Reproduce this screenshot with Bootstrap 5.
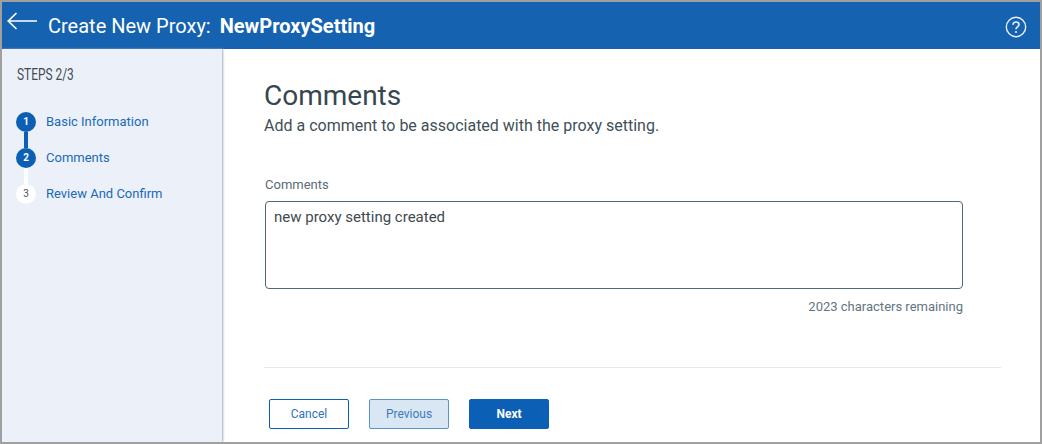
<!DOCTYPE html>
<html lang="en">
<head>
<meta charset="utf-8">
<title>Create New Proxy</title>
<link href="https://cdn.jsdelivr.net/npm/bootstrap@5.3.0/dist/css/bootstrap.min.css" rel="stylesheet">
<style>
html,body{height:100%;margin:0;overflow:hidden}
body{font-family:Roboto,"Liberation Sans",sans-serif;background:#fff}
.frame{width:1042px;height:444px;border:2px solid #a0a0a0;display:flex;flex-direction:column;overflow:hidden}
.topbar{height:47px;flex:none;background:#1462b0;color:#fff;padding:0 13px 0 5px}
.back-ico{width:31px;height:20px;margin-top:-9px;flex:none}
.head-title{font-size:20px;margin-left:10px;line-height:24px}
.head-name{font-size:20px;font-weight:700;margin-left:9px;line-height:24px}
.help-ico{width:22px;height:22px;flex:none;margin-top:2px}
.side{width:220px;flex:none;background:#ecf1f9;box-shadow:1px 0 2px 0 #a9acb0;padding:15px 14px 0}
.steps-ttl{font-size:17px;line-height:20px;color:#3f4a55;margin:0 0 28px 1px;transform:scaleX(.7);transform-origin:left center;white-space:nowrap}
.step-col{width:20px;flex:none}
.dot{width:20px;height:20px;border-radius:50%;font-size:10px;font-weight:700;line-height:20px;text-align:center;background:#0b5fb4;color:#fff}
.dot-off{background:#fff;color:#4a5560;font-weight:400}
.link-line{width:4px;height:16px;margin:0 auto;background:#0b5fb4}
.link-off{background:#fff}
.step-lbl{font-size:13px;line-height:20px;color:#1a69b8;margin-left:10px}
.pane{padding:0 39px 0 42px;min-width:0}
.pg-title{font-size:28px;font-weight:400;line-height:34px;color:#36474f;margin:30px 0 0}
.pg-sub{font-size:16px;line-height:20px;color:#3f4f58;margin:3px 0 0}
.fld-lbl{font-size:13px;line-height:16px;color:#5a6b76;margin:41px 0 8px 1px}
.txt-box{width:698px;height:88px;margin-left:1px;border:1px solid #4f6a77;border-radius:4px;padding:6px 8px;font-size:15px;line-height:18px;color:#3f4a50;resize:none;box-shadow:none;font-family:inherit}
.txt-box:focus{border-color:#4f6a77;box-shadow:none}
.remain{width:699px;text-align:right;font-size:13px;line-height:16px;color:#64757f;margin-top:10px}
.sep{border:0;border-top:1px solid #e6e8ea;opacity:1;margin:52px 0 31px}
.act-row{padding-left:5px;gap:20px}
.act-btn{width:80px;height:30px;padding:0;font-size:12px;line-height:28px;border-radius:2px;border:1px solid #0b5fb4;font-family:Roboto,sans-serif}
.act-cancel{background:#fff;color:#2d74bb}
.act-prev{background:#d9e6f4;color:#3c7cbd;border-color:#5b95d0}
.act-next{background:#0b5fb4;color:#fff;font-weight:700}
</style>
</head>
<body>
<div class="frame">
  <header class="topbar d-flex align-items-center">
    <svg class="back-ico" viewBox="0 0 31 20" fill="none" stroke="#fff" stroke-width="1.7"><path d="M1 10H30M9.5 2 1.2 10 9.5 18"/></svg>
    <span class="head-title">Create New Proxy:</span>
    <span class="head-name">NewProxySetting</span>
    <svg class="help-ico ms-auto" viewBox="0 0 22 22" fill="none"><circle cx="11" cy="11" r="9.7" stroke="#e6eef7" stroke-width="1.4"/><path d="M8 8.8C8 7 9.3 6 11 6s3 1 3 2.6c0 2.4-3 2.2-3 4.7" stroke="#e6eef7" stroke-width="1.7"/><circle cx="11" cy="16" r="1.1" fill="#e6eef7"/></svg>
  </header>
  <div class="d-flex flex-grow-1" style="min-height:0">
    <aside class="side">
      <div class="steps-ttl">STEPS 2/3</div>
      <div class="d-flex">
        <div class="step-col"><div class="dot">1</div><div class="link-line"></div></div>
        <div class="step-lbl">Basic Information</div>
      </div>
      <div class="d-flex">
        <div class="step-col"><div class="dot">2</div><div class="link-line link-off"></div></div>
        <div class="step-lbl">Comments</div>
      </div>
      <div class="d-flex">
        <div class="step-col"><div class="dot dot-off">3</div></div>
        <div class="step-lbl">Review And Confirm</div>
      </div>
    </aside>
    <main class="pane flex-grow-1">
      <h1 class="pg-title">Comments</h1>
      <p class="pg-sub">Add a comment to be associated with the proxy setting.</p>
      <label class="fld-lbl d-block" for="cmt">Comments</label>
      <textarea id="cmt" class="form-control txt-box">new proxy setting created</textarea>
      <div class="remain">2023 characters remaining</div>
      <hr class="sep">
      <div class="d-flex act-row">
        <button type="button" class="btn act-btn act-cancel">Cancel</button>
        <button type="button" class="btn act-btn act-prev">Previous</button>
        <button type="button" class="btn act-btn act-next">Next</button>
      </div>
    </main>
  </div>
</div>
<script src="https://cdn.jsdelivr.net/npm/bootstrap@5.3.0/dist/js/bootstrap.bundle.min.js"></script>
</body>
</html>
